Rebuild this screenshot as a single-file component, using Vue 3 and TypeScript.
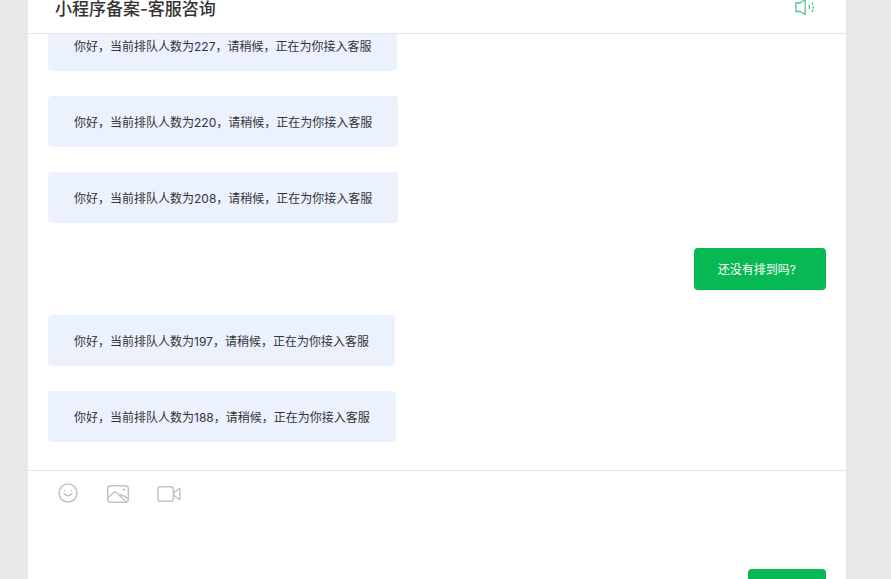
<script setup lang="ts">
interface Message {
  id: number
  mine: boolean
  text: string
}

const count = [227, 220, 208]
const later = [197, 188]
const line = (n: number) => `你好，当前排队人数为${n}，请稍候，正在为你接入客服`

const messages: Message[] = [
  ...count.map((n) => ({ id: n, mine: false, text: line(n) })),
  { id: 1, mine: true, text: '还没有排到吗?' },
  ...later.map((n) => ({ id: n, mine: false, text: line(n) })),
]
</script>

<template>
  <div class="page">
    <main class="card">
      <header class="head">
        <h1 class="title">小程序备案-客服咨询</h1>
        <svg class="speaker" width="22" height="18" viewBox="0 0 22 18" fill="none" stroke="#4fc987" stroke-width="1.3">
          <path d="M1.8 4H6L11.2 0.8V15.5L6 12.5H1.8Z" stroke-linejoin="round" />
          <path d="M15 5.5Q16.2 7.7 15 10" />
          <path d="M18 3.5Q20.4 8 18 13" stroke-dasharray="2.6 1" />
        </svg>
      </header>

      <section class="list">
        <div class="scroller">
          <div v-for="m in messages" :key="m.id" class="row" :class="{ mine: m.mine }">
            <div class="bubble">{{ m.text }}</div>
          </div>
        </div>
      </section>

      <footer class="composer">
        <div class="tools">
          <svg width="22" height="22" viewBox="0 0 22 22" fill="none" stroke="#c0c4cc" stroke-width="1.5">
            <circle cx="11" cy="10" r="9" />
            <path d="M7 10.5Q11 15 15 10.5" stroke-linecap="round" />
            <circle cx="7.6" cy="7.6" r=".5" fill="#c0c4cc" stroke-width=".6" />
            <circle cx="14.4" cy="7.6" r=".5" fill="#c0c4cc" stroke-width=".6" />
          </svg>
          <svg width="24" height="20" viewBox="0 0 24 20" fill="none" stroke="#c0c4cc" stroke-width="1.5">
            <rect x="1.7" y="1.7" width="20.6" height="16.6" rx="3" />
            <path d="M2 14L7.5 8.5Q9 7.5 10.5 8.5L20 17.5" stroke-linejoin="round" />
            <path d="M13 12L15.5 10.6L22 14.5" />
            <circle cx="18" cy="5.7" r=".9" fill="#c0c4cc" stroke-width=".8" />
          </svg>
          <svg width="24" height="18" viewBox="0 0 24 18" fill="none" stroke="#c0c4cc" stroke-width="1.5">
            <rect x="1" y="1.7" width="15.4" height="14.6" rx="2.5" />
            <path d="M17 7.5L22.8 3.2V14.8L17 10.5Z" stroke-linejoin="round" />
          </svg>
        </div>
        <div class="actions">
          <button class="send" type="button" aria-label="发送"></button>
        </div>
      </footer>
    </main>
  </div>
</template>

<style scoped>
.page {
  height: 579px;
  overflow: hidden;
  background: #e8e8e8;
  padding: 0 45px 0 28px;
  box-sizing: border-box;
  font-family: Inter, "Noto Sans CJK SC", sans-serif;
}
.card {
  height: 579px;
  background: #fff;
  display: flex;
  flex-direction: column;
}
.head {
  flex: 0 0 34px;
  box-sizing: border-box;
  border-bottom: 1px solid #e6e6e6;
  display: flex;
  justify-content: space-between;
  align-items: flex-start;
  padding: 0 30px 0 27px;
  overflow: hidden;
}
.title {
  margin: -3px 0 0;
  font-size: 17px;
  line-height: 24px;
  font-weight: 500;
  color: #333;
  white-space: nowrap;
}
.speaker {
  margin-top: -1px;
}
.list {
  flex: 0 0 436px;
  overflow: hidden;
}
.scroller {
  margin-top: -14px;
  padding: 0 20px;
  display: flex;
  flex-direction: column;
  gap: 25px;
}
.row {
  display: flex;
}
.row.mine {
  justify-content: flex-end;
}
.bubble {
  padding: 0 26px;
  height: 51px;
  line-height: 53px;
  border-radius: 4px;
  background: #ebf1fd;
  color: #333;
  font-size: 12px;
  white-space: nowrap;
}
.mine .bubble {
  height: 42px;
  line-height: 44px;
  padding: 0 30px 0 24px;
  background: #07b853;
  color: #fff;
}
.composer {
  flex: 1;
  border-top: 1px solid #e4e4ec;
  padding: 12px 20px 0;
  min-height: 0;
}
.tools {
  display: flex;
  align-items: center;
  gap: 27px;
  height: 22px;
  padding-left: 9px;
}
.actions {
  display: flex;
  justify-content: flex-end;
  margin-top: 64px;
}
.send {
  width: 78px;
  height: 40px;
  border: 0;
  border-radius: 4px;
  background: #07b853;
}
</style>
